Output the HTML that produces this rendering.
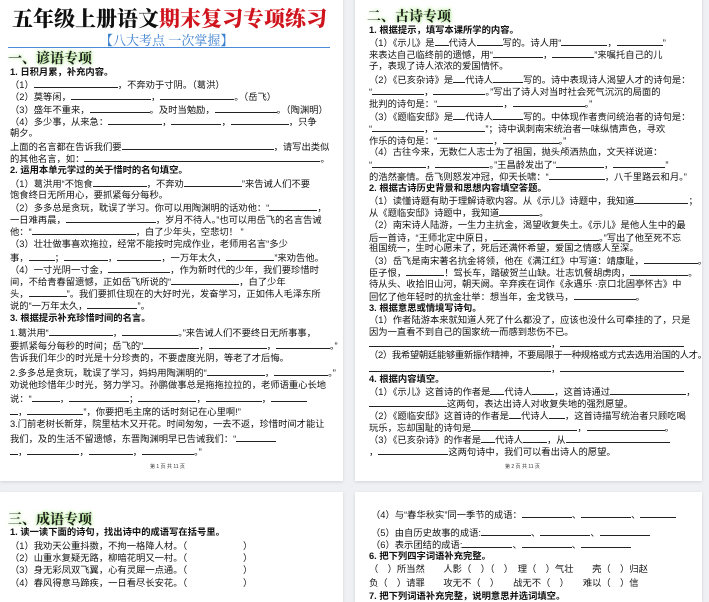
<!DOCTYPE html>
<html><head><meta charset="utf-8"><style>
body{margin:0;width:709px;height:593px;background:#eef0f4;position:relative;overflow:hidden;font-family:"Liberation Sans","Noto Sans CJK SC",sans-serif;color:#111}
.pg{position:absolute;background:#fff;box-shadow:0 1px 3px rgba(0,0,0,.12);overflow:hidden}
.l{position:absolute;font-size:9.3px;line-height:12px;white-space:nowrap;left:10px}
.u{display:inline-block;border-bottom:1px solid #222;height:9px;vertical-align:baseline}
.h{position:absolute;font-family:"Noto Serif CJK SC",serif;font-weight:bold;font-size:14px;line-height:16px;color:#1a1a1a;text-shadow:0 0 3px #9be07a,0 0 5px #b8ef95;left:8px}
.b{font-weight:bold}
.pn{position:absolute;font-size:5px;color:#333;top:467px}
</style></head><body>
<div class="pg" style="left:0;top:-4px;width:343px;height:485px">
<div style="position:absolute;top:9px;left:12px;font-family:'Noto Serif CJK SC',serif;font-weight:900;font-size:21px;line-height:26px;letter-spacing:0">五年级上册语文<span style="color:#d0141e">期末复习专项练习</span></div>
<div style="position:absolute;top:36px;left:100px;font-family:'Noto Serif CJK SC',serif;font-size:13px;color:#3a7fd0;line-height:16px">【八大考点 一次掌握】</div>
<div style="position:absolute;top:51px;left:8px;width:322px;border-top:1px solid #4a8ad8"></div>
<div class="h" style="top:54px">一、谚语专项</div>
<div class="l b" style="top:70px">1. 日积月累，补充内容。</div>
<div class="l" style="top:82px">（1）<span class="u" style="width:84px"></span>，不奔劝于寸阴。（葛洪）</div>
<div class="l" style="top:94px">（2）莫等闲，<span class="u" style="width:80px"></span>，<span class="u" style="width:74px"></span>。（岳飞）</div>
<div class="l" style="top:107px">（3）盛年不重来，<span class="u" style="width:60px"></span>。及时当勉励，<span class="u" style="width:62px"></span>。（陶渊明）</div>
<div class="l" style="top:119px">（4）多少事，从来急：<span class="u" style="width:54px"></span>，<span class="u" style="width:50px"></span>，<span class="u" style="width:58px"></span>，只争</div>
<div class="l" style="top:131px">朝夕。</div>
<div class="l" style="top:144px">上面的名言都在告诉我们要<span class="u" style="width:152px"></span>，请写出类似</div>
<div class="l" style="top:156px">的其他名言，如：<span class="u" style="width:236px"></span>。</div>
<div class="l b" style="top:168px">2. 运用本单元学过的关于惜时的名句填空。</div>
<div class="l" style="top:181px">（1）葛洪用“不饱食<span class="u" style="width:54px"></span>，不奔劝<span class="u" style="width:58px"></span>”来告诫人们不要</div>
<div class="l" style="top:193px">饱食终日无所用心，要抓紧每分每秒。</div>
<div class="l" style="top:205px">（2）多多总是贪玩，耽误了学习。你可以用陶渊明的话劝他：“<span class="u" style="width:48px"></span>，</div>
<div class="l" style="top:217px">一日难再晨，<span class="u" style="width:90px"></span>，岁月不待人。”也可以用岳飞的名言告诫</div>
<div class="l" style="top:229px">他：“<span class="u" style="width:104px"></span>，白了少年头，空悲切！ ”</div>
<div class="l" style="top:242px">（3）壮壮做事喜欢拖拉，经常不能按时完成作业，老师用名言“多少</div>
<div class="l" style="top:255px">事，<span class="u" style="width:26px"></span>；<span class="u" style="width:44px"></span>，<span class="u" style="width:44px"></span>，一万年太久，<span class="u" style="width:48px"></span>”来劝告他。</div>
<div class="l" style="top:267px">（4）一寸光阴一寸金，<span class="u" style="width:62px"></span>，作为新时代的少年，我们要珍惜时</div>
<div class="l" style="top:279px">间，不给青春留遗憾，正如岳飞所说的“<span class="u" style="width:68px"></span>，白了少年</div>
<div class="l" style="top:291px">头，<span class="u" style="width:38px"></span>”。我们要抓住现在的大好时光，发奋学习，正如伟人毛泽东所</div>
<div class="l" style="top:303px">说的“一万年太久，<span class="u" style="width:50px"></span>”。</div>
<div class="l b" style="top:316px">3. 根据提示补充珍惜时间的名言。</div>
<div class="l" style="top:330px">1.葛洪用“<span class="u" style="width:64px"></span>，<span class="u" style="width:56px"></span>。”来告诫人们不要终日无所事事，</div>
<div class="l" style="top:343px">要抓紧每分每秒的时间；岳飞的“<span class="u" style="width:56px"></span>，<span class="u" style="width:58px"></span>，<span class="u" style="width:54px"></span>。”</div>
<div class="l" style="top:356px">告诉我们年少的时光是十分珍贵的，不要虚度光阴，等老了才后悔。</div>
<div class="l" style="top:370px">2.多多总是贪玩，耽误了学习，妈妈用陶渊明的“<span class="u" style="width:58px"></span>，<span class="u" style="width:54px"></span>。”</div>
<div class="l" style="top:383px">劝说他珍惜年少时光，努力学习。孙鹏做事总是拖拖拉拉的，老师语重心长地</div>
<div class="l" style="top:396px">说：“<span class="u" style="width:28px"></span>，<span class="u" style="width:60px"></span>；<span class="u" style="width:58px"></span>，<span class="u" style="width:56px"></span>，<span class="u" style="width:36px"></span></div>
<div class="l" style="top:409px"><span class="u" style="width:8px"></span>，<span class="u" style="width:56px"></span>”，你要把毛主席的话时刻记在心里啊!”</div>
<div class="l" style="top:422px">3.门前老树长新芽，院里枯木又开花。时间匆匆，一去不返，珍惜时间才能让</div>
<div class="l" style="top:436px">我们，及的生活不留遗憾，东晋陶渊明早已告诫我们：“<span class="u" style="width:40px"></span></div>
<div class="l" style="top:449px"><span class="u" style="width:8px"></span>，<span class="u" style="width:52px"></span>，<span class="u" style="width:44px"></span>，<span class="u" style="width:52px"></span>。”</div>
<div class="pn" style="left:150px">第 1 页 共 11 页</div>
</div>
<div class="pg" style="left:355px;top:-4px;width:347px;height:485px">
<div class="h" style="top:12px;left:12px">二、古诗专项</div>
<div class="l b" style="top:28px;left:14px">1. 根据提示，填写本课所学的内容。</div>
<div class="l" style="top:40px;left:14px">（1）《示儿》是<span class="u" style="width:14px"></span>代诗人<span class="u" style="width:26px"></span>写的。诗人用“<span class="u" style="width:46px"></span>，<span class="u" style="width:46px"></span>”</div>
<div class="l" style="top:52px;left:14px">来表达自己临终前的遗憾，用“<span class="u" style="width:50px"></span>，<span class="u" style="width:42px"></span>”来嘱托自己的儿</div>
<div class="l" style="top:64px;left:14px">子，表现了诗人浓浓的爱国情怀。</div>
<div class="l" style="top:77px;left:14px">（2）《已亥杂诗》是<span class="u" style="width:12px"></span>代诗人<span class="u" style="width:30px"></span>写的。诗中表现诗人渴望人才的诗句是：</div>
<div class="l" style="top:89px;left:14px">“<span class="u" style="width:52px"></span>，<span class="u" style="width:52px"></span>。”写出了诗人对当时社会死气沉沉的局面的</div>
<div class="l" style="top:101px;left:14px">批判的诗句是：“<span class="u" style="width:66px"></span>，<span class="u" style="width:72px"></span>。”</div>
<div class="l" style="top:114px;left:14px">（3）《题临安邸》是<span class="u" style="width:12px"></span>代诗人<span class="u" style="width:30px"></span>写的。中体现作者责问统治者的诗句是：</div>
<div class="l" style="top:126px;left:14px">“<span class="u" style="width:52px"></span>，<span class="u" style="width:52px"></span>”；诗中讽刺南宋统治者一味纵情声色，寻欢</div>
<div class="l" style="top:138px;left:14px">作乐的诗句是：“<span class="u" style="width:56px"></span>，<span class="u" style="width:56px"></span>。”</div>
<div class="l" style="top:150px;left:14px">（4）古往今来，无数仁人志士为了祖国，抛头颅洒热血，文天祥说道：</div>
<div class="l" style="top:162px;left:14px">“<span class="u" style="width:54px"></span>，<span class="u" style="width:54px"></span>。”王昌龄发出了“<span class="u" style="width:48px"></span>，<span class="u" style="width:52px"></span>”</div>
<div class="l" style="top:174px;left:14px">的浩然豪情。岳飞则怒发冲冠，仰天长啸：“<span class="u" style="width:56px"></span>，八千里路云和月。”</div>
<div class="l b" style="top:186px;left:14px">2. 根据古诗历史背景和思想内容填空答题。</div>
<div class="l" style="top:198px;left:14px">（1）读懂诗题有助于理解诗歌内容。从《示儿》诗题中，我知道<span class="u" style="width:54px"></span>；</div>
<div class="l" style="top:210px;left:14px">从《题临安邸》诗题中，我知道<span class="u" style="width:40px"></span>。</div>
<div class="l" style="top:223px;left:14px">（2）南宋诗人陆游，一生力主抗金，渴望收复失土。《示儿》是他人生中的最</div>
<div class="l" style="top:235px;left:14px">后一首诗，“王师北定中原日，<span class="u" style="width:106px"></span>。”写出了他至死不忘</div>
<div class="l" style="top:246px;left:14px">祖国统一，生时心愿未了，死后还满怀希望，爱国之情感人至深。</div>
<div class="l" style="top:258px;left:14px">（3）岳飞是南宋著名抗金将领，他在《满江红》中写道：靖康耻，<span class="u" style="width:54px"></span>。</div>
<div class="l" style="top:270px;left:14px">臣子恨，<span class="u" style="width:38px"></span>！驾长车，踏破贺兰山缺。壮志饥餐胡虏肉，<span class="u" style="width:58px"></span>。</div>
<div class="l" style="top:282px;left:14px">待从头、收拾旧山河，朝天阙。辛弃疾在词作《永遇乐 ·京口北固亭怀古》中</div>
<div class="l" style="top:294px;left:14px">回忆了他年轻时的抗金壮举：想当年，金戈铁马，<span class="u" style="width:62px"></span>。</div>
<div class="l b" style="top:306px;left:14px">3. 根据意思或情境写诗句。</div>
<div class="l" style="top:318px;left:14px">（1）作者陆游本来就知道人死了什么都没了，应该也没什么可牵挂的了，只是</div>
<div class="l" style="top:330px;left:14px">因为一直看不到自己的国家统一而感到悲伤不已。</div>
<div class="l" style="top:341px;left:14px"><span class="u" style="width:182px"></span>，<span class="u" style="width:124px"></span></div>
<div class="l" style="top:353px;left:14px;letter-spacing:-0.3px">（2）我希望朝廷能够重新振作精神，不要局限于一种规格或方式去选用治国的人才。</div>
<div class="l" style="top:366px;left:14px"><span class="u" style="width:182px"></span>，<span class="u" style="width:124px"></span></div>
<div class="l b" style="top:377px;left:14px">4. 根据内容填空。</div>
<div class="l" style="top:389px;left:14px">（1）《示儿》这首诗的作者是<span class="u" style="width:14px"></span>代诗人<span class="u" style="width:22px"></span>，这首诗通过<span class="u" style="width:76px"></span>，</div>
<div class="l" style="top:401px;left:14px"><span class="u" style="width:78px"></span>这两句，表达出诗人对收复失地的强烈愿望。</div>
<div class="l" style="top:413px;left:14px">（2）《题临安邸》这首诗的作者是<span class="u" style="width:12px"></span>代诗人<span class="u" style="width:16px"></span>，这首诗描写统治者只顾吃喝</div>
<div class="l" style="top:425px;left:14px">玩乐，忘却国耻的诗句是<span class="u" style="width:106px"></span>，<span class="u" style="width:78px"></span>。</div>
<div class="l" style="top:437px;left:14px">（3）《已亥杂诗》的作者是<span class="u" style="width:14px"></span>代诗人<span class="u" style="width:24px"></span>，从<span class="u" style="width:104px"></span></div>
<div class="l" style="top:449px;left:14px">，<span class="u" style="width:70px"></span>这两句诗中，我们可以看出诗人的愿望。</div>
<div class="pn" style="left:150px">第 2 页 共 11 页</div>
</div>
<div class="pg" style="left:0;top:492px;width:343px;height:110px">
<div class="h" style="top:19px">三、成语专项</div>
<div class="l b" style="top:34px">1. 读一读下面的诗句，找出诗中的成语写在括号里。</div>
<div class="l" style="top:48px">（1）我劝天公重抖擞，不拘一格降人材。（　　　　　　）</div>
<div class="l" style="top:60px">（2）山重水复疑无路，柳暗花明又一村。（　　　　　　）</div>
<div class="l" style="top:72px">（3）身无彩凤双飞翼，心有灵犀一点通。（　　　　　　）</div>
<div class="l" style="top:85px">（4）春风得意马蹄疾，一日看尽长安花。（　　　　　　）</div>
</div>
<div class="pg" style="left:355px;top:492px;width:347px;height:110px">
<div class="l" style="top:16px;left:16px">（4）与“春华秋实”同一季节的成语：<span class="u" style="width:50px"></span>、<span class="u" style="width:50px"></span>、<span class="u" style="width:36px"></span></div>
<div class="l" style="top:34px;left:16px">（5）由自历史故事的成语:<span class="u" style="width:50px"></span>、<span class="u" style="width:50px"></span>、<span class="u" style="width:50px"></span></div>
<div class="l" style="top:46px;left:16px">（6）表示团结的成语:<span class="u" style="width:50px"></span>、<span class="u" style="width:50px"></span>、<span class="u" style="width:50px"></span></div>
<div class="l b" style="top:58px;left:14px">6. 把下列四字词语补充完整。</div>
<div class="l" style="top:71px;left:14px">（　）所当然　　人影（　）（　）　理（　）气壮　　壳（　）归赵</div>
<div class="l" style="top:85px;left:14px">负（　）请罪　　攻无不（　）　　战无不（　）　　难以（　）信</div>
<div class="l b" style="top:98px;left:14px">7. 把下列词语补充完整，说明意思并选词填空。</div>
</div>
</body></html>
